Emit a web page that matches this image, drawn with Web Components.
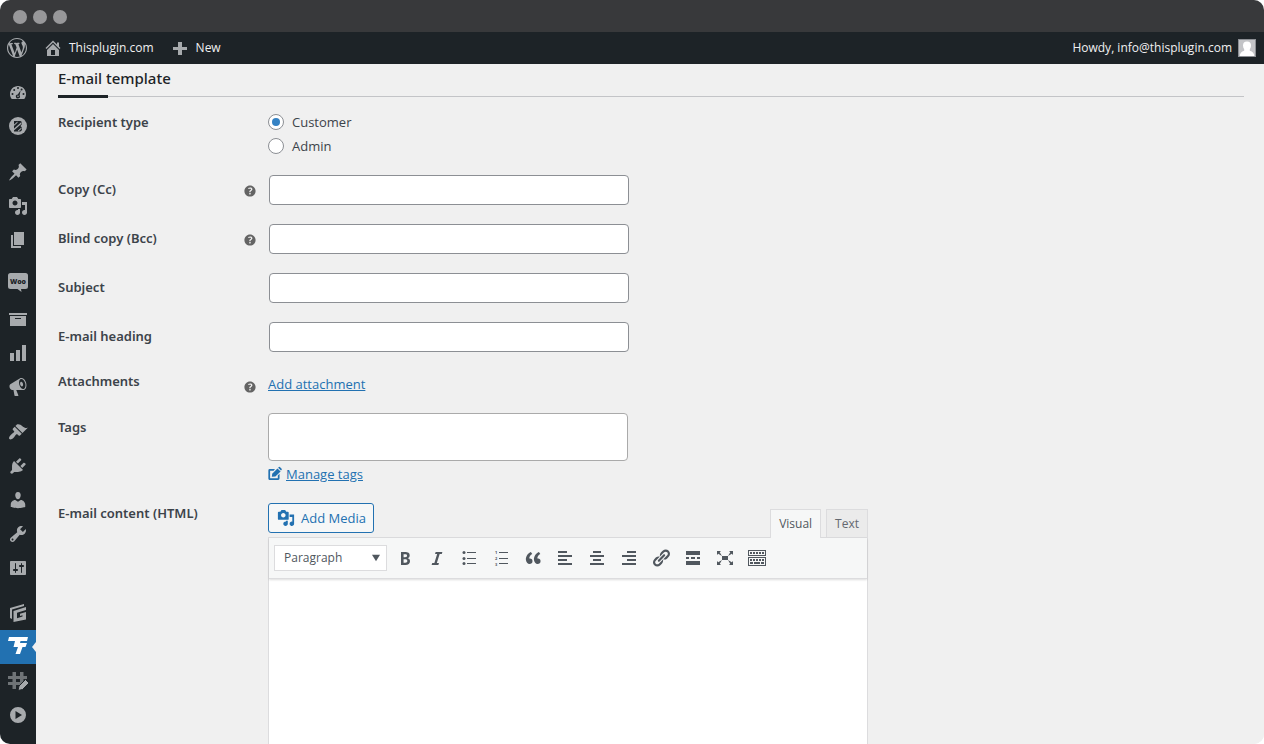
<!DOCTYPE html>
<html lang="en">
<head>
<meta charset="utf-8">
<meta name="viewport" content="width=device-width, initial-scale=1">
<title>E-mail template</title>
<style>
  body { margin: 0; background: #fff; color: #3c434a; font: 13px/20px "Open Sans", "Noto Sans", sans-serif; }
</style>
</head>
<body>
<app-window>
  <admin-bar slot="bar"></admin-bar>
  <admin-menu slot="menu"></admin-menu>
  <email-form></email-form>
</app-window>

<script>
const ICONS = {
  wordpress: '<path d="M20 10c0-5.51-4.49-10-10-10C4.48 0 0 4.49 0 10c0 5.52 4.48 10 10 10 5.51 0 10-4.48 10-10zM7.78 15.37L4.37 6.22c.55-.02 1.17-.08 1.17-.08.5-.06.44-1.13-.06-1.11 0 0-1.45.11-2.37.11-.18 0-.37 0-.58-.01C4.12 2.69 6.87 1.11 10 1.11c2.33 0 4.45.87 6.05 2.34-.68-.11-1.65.39-1.65 1.58 0 .74.45 1.36.9 2.1.35.61.55 1.36.55 2.46 0 1.49-1.4 5-1.4 5l-3.03-8.37c.54-.02.82-.17.82-.17.5-.05.44-1.25-.06-1.22 0 0-1.44.12-2.38.12-.87 0-2.33-.12-2.33-.12-.5-.03-.56 1.2-.06 1.22l.92.08 1.26 3.41zM17.41 10c.24-.64.74-1.87.43-4.25.7 1.29 1.05 2.71 1.05 4.25 0 3.29-1.73 6.24-4.4 7.78.97-2.59 1.94-5.2 2.92-7.78zM6.1 18.09C3.12 16.65 1.11 13.53 1.11 10c0-1.3.23-2.48.72-3.59C3.25 10.3 4.67 14.2 6.1 18.09zm4.03-6.63l2.58 6.98c-.86.29-1.76.45-2.71.45-.79 0-1.57-.11-2.29-.33.81-2.38 1.62-4.74 2.42-7.1z"/>',
  home: '<path d="M16 8.5l1.53 1.53-1.06 1.06L10 4.6l-6.47 6.49-1.06-1.06L10 2.5l4 4v-2h2v4zm-6-2.46l6 5.99V18H4v-5.97zM12 17v-5H8v5h4z"/>',
  plus: '<path d="M8 4h4v5h5v3h-5v5H8v-5H3V9h5z"/>',
  dashboard: '<path fill-rule="evenodd" d="M3.76 16h12.48c1.1-1.37 1.76-3.11 1.76-5 0-4.42-3.58-8-8-8s-8 3.58-8 8c0 1.89.66 3.63 1.76 5zM9 5a1 1 0 1 0 2 0 1 1 0 1 0-2 0zM5.2 7a1 1 0 1 0 2 0 1 1 0 1 0-2 0zM12.6 6.6a1 1 0 1 0 2 0 1 1 0 1 0-2 0zM3.5 11a1 1 0 1 0 2 0 1 1 0 1 0-2 0zM14.5 11a1 1 0 1 0 2 0 1 1 0 1 0-2 0zM12.6 7.3l-1 5.2a2 2 0 1 1-1.8-1zM9.2 13.2a.8.8 0 1 0 1.6 0 .8.8 0 1 0-1.6 0z"/>',
  badge: '<circle cx="10" cy="9" r="9"/><path class="hole" d="M6 4h6.500Q14.500 4.500 14 7L12.500 9Q14.500 10 14 12.500T11.500 14.500H6z"/><path d="M5 12.500L13.500 5v1.800L5 14.300zM5 8.500L9.500 4.500v1.300L5 9.800zM10 13.500l3.500-3v1.300l-3.500 3z"/>',
  pin: '<path d="M10.44 3.02l1.82-1.82 6.36 6.35-1.83 1.82c-1.05-.68-2.48-.57-3.41.36l-.75.75c-.92.93-1.04 2.35-.35 3.41l-1.83 1.82-2.41-2.41-2.8 2.79c-.42.42-3.38 2.71-3.8 2.29s1.86-3.39 2.28-3.81l2.79-2.79L4.1 9.36l1.83-1.82c1.05.69 2.48.57 3.4-.36l.75-.75c.93-.92 1.05-2.35.36-3.41z"/>',
  media: '<path d="M13 11V4c0-.55-.45-1-1-1h-1.670L9 1H5L3.670 3H2c-.55 0-1 .45-1 1v7c0 .55.45 1 1 1h10c.55 0 1-.45 1-1zM7 4.500c1.380 0 2.500 1.120 2.500 2.500S8.380 9.500 7 9.500 4.500 8.380 4.500 7 5.620 4.500 7 4.500zM14 6h5v10.500c0 1.380-1.120 2.500-2.500 2.500S14 17.880 14 16.500s1.120-2.500 2.500-2.500c.17 0 .34.02.5.05V9h-3V6zm-4 8.050V13h2v3.500c0 1.380-1.120 2.500-2.500 2.500S7 17.880 7 16.500 8.120 14 9.500 14c.17 0 .34.02.5.05z"/>',
  pages: '<path d="M6 15V2h10v13H6zm-1 1h8v2H3V5h2v11z"/>',
  woo: '<path d="M2.500-2h15q2.500 0 2.500 2.500v11q0 2.500-2.500 2.500H13l.5 3-4-3h-7Q0 14 0 11.500V.500Q0-2 2.500-2z"/><text class="hole" x="10" y="9" text-anchor="middle" font-family="Open Sans, sans-serif" font-size="7" font-weight="800">Woo</text>',
  archive: '<path d="M19 4v2H1V4h18zM2 7h16v10H2V7zm11 3V9H7v1h6z"/>',
  chart: '<path d="M18 18V2h-4v16h4zm-6 0V7H8v11h4zm-6 0v-8H2v8h4z"/>',
  megaphone: '<path d="M18.15 5.94c.46 1.62.38 3.22-.02 4.48-.42 1.28-1.26 2.18-2.3 2.48-.16.06-.26.06-.4.06-.06.02-.12.02-.18.02-.06.02-.14.02-.22.02h-6.8l2.22 5.5c.02.14-.06.26-.14.34-.08.1-.24.16-.34.16H6.95c-.1 0-.26-.06-.34-.16-.08-.08-.16-.2-.14-.34l-1-5.5H4.25l-.02-.02c-.5.06-1.08-.18-1.54-.62s-.88-1.08-1.06-1.88c-.24-.8-.2-1.56-.02-2.2.18-.62.58-1.08 1.06-1.3l.02-.02 9-5.4c.1-.06.18-.1.24-.16.06-.04.14-.08.24-.12.16-.08.28-.12.5-.18 1.04-.3 2.24.1 3.22.98s1.84 2.24 2.26 3.86zm-2.58 5.98h-.02c.4-.1.74-.34 1.04-.7.58-.7.86-1.76.86-3.04 0-.64-.1-1.3-.28-1.98-.34-1.36-1.02-2.5-1.78-3.24s-1.68-1.1-2.46-.88c-.82.22-1.4.96-1.7 2-.32 1.04-.28 2.36.06 3.72.38 1.36 1 2.5 1.8 3.24.78.74 1.62 1.1 2.48.88zm-2.54-7.08c.22-.04.42-.02.62.04.38.16.76.48 1.02 1s.42 1.2.42 1.78c0 .3-.04.56-.12.8-.18.48-.44.84-.86.94-.34.1-.8-.06-1.14-.4s-.64-.86-.78-1.5c-.18-.62-.12-1.24.02-1.72s.48-.84.82-.94z"/>',
  brush: '<path d="M14.48 11.06L7.41 3.99l1.5-1.5c.5-.56 2.3-.47 3.51.32 1.21.8 1.43 1.28 2.91 2.1 1.18.64 2.45 1.26 4.45.85zm-.71.71L6.7 4.7 4.93 6.47c-.39.39-.39 1.02 0 1.41l1.06 1.06c.39.39.39 1.03 0 1.42-.6.6-1.43 1.11-2.21 1.69-.35.26-.7.53-1.01.84C1.43 14.23.4 16.08 1.4 17.07c.99 1 2.84-.03 4.18-1.36.31-.31.58-.66.85-1.02.57-.78 1.08-1.61 1.69-2.21.39-.39 1.02-.39 1.41 0l1.06 1.06c.39.39 1.02.39 1.41 0z"/>',
  plug: '<path d="M13.11 4.36L9.87 7.6 8 5.73l3.24-3.24c.35-.34 1.05-.2 1.56.32.52.51.66 1.21.31 1.55zm-8 1.77l.91-1.12 9.01 9.01-1.19.84c-.71.71-2.63 1.16-3.82 1.16H6.14L4.9 17.26c-.59.59-1.54.59-2.12 0-.59-.58-.59-1.53 0-2.12l1.24-1.24v-3.88c0-1.13.4-3.19 1.09-3.89zm7.26 3.97l3.24-3.24c.34-.35 1.04-.21 1.55.31.52.51.66 1.21.31 1.55l-3.24 3.25z"/>',
  user: '<path d="M10 9.250c-2.270 0-2.730-3.440-2.730-3.440C7 4.020 7.820 2 9.970 2c2.160 0 2.980 2.020 2.710 3.810 0 0-.41 3.440-2.680 3.440zm0 2.570L12.720 10c2.390 0 4.520 2.330 4.520 4.530v2.490s-3.650 1.130-7.240 1.130c-3.650 0-7.240-1.130-7.240-1.130v-2.490c0-2.250 1.940-4.480 4.470-4.480z"/>',
  wrench: '<path d="M16.68 9.77c-1.34 1.34-3.3 1.67-4.95.99l-5.41 6.52c-.99.99-2.59.99-3.58 0s-.99-2.59 0-3.57l6.52-5.42c-.68-1.65-.35-3.61.99-4.95 1.28-1.28 3.12-1.62 4.72-1.06l-2.89 2.89 2.82 2.82 2.86-2.87c.53 1.58.18 3.39-1.08 4.65zM3.81 16.21c.4.39 1.04.39 1.43 0 .4-.4.4-1.04 0-1.43-.39-.4-1.03-.4-1.43 0-.39.39-.39 1.03 0 1.43z"/>',
  sliders: '<path d="M18 16V4c0-.55-.45-1-1-1H3c-.55 0-1 .45-1 1v12c0 .55.45 1 1 1h14c.55 0 1-.45 1-1zM8 11h1c.55 0 1 .45 1 1s-.45 1-1 1H8v1.5c0 .28-.22.5-.5.5s-.5-.22-.5-.5V13H6c-.55 0-1-.45-1-1s.45-1 1-1h1V5.5c0-.28.22-.5.5-.5s.5.22.5.5V11zm5-2h-1c-.55 0-1-.45-1-1s.45-1 1-1h1V5.5c0-.28.22-.5.5-.5s.5.22.5.5V7h1c.55 0 1 .45 1 1s-.45 1-1 1h-1v5.5c0 .28-.22.5-.5.5s-.5-.22-.5-.5V9z"/>',
  cards: '<path d="M2 5L16 1v2L4 6.500V16l-2-1zM5.500 8L18 4v3L9 9.800v5.400l5.500-1.700v-1.300l-2.500.8v-2.300L18 9v7.500L5.500 19z"/>',
  bolt: '<path d="M1 0H20L19 4H12.500L12 6H19L17.500 10H14.500L12 17H7.500L10 10H5.500L7 4H0z"/>',
  hash: '<path opacity=".6" d="M4.500 1H8v4h4V1h3.500v4H19v3h-3.500v3H18v3H8v4H4.500v-4H0v-3h4.500V8H0V5h4.500zM8 8v3h4V8z"/><path class="edge" d="M10 19.500l1-4.500 6.500-6.500 3.500 3.500-6.500 6.500z"/>',
  play: '<path fill-rule="evenodd" d="M10 2a8 8 0 1 0 0 16 8 8 0 1 0 0-16zM7.500 6v8l6.500-4z"/>',
  help: '<path d="M17 10c0-3.870-3.140-7-7-7-3.870 0-7 3.130-7 7s3.130 7 7 7c3.860 0 7-3.130 7-7zm-6.300 1.480H9.140v-.43c0-.38.08-.7.24-.98s.46-.57.88-.89c.41-.29.68-.53.81-.71.14-.18.2-.39.2-.62 0-.25-.09-.44-.28-.58-.19-.13-.45-.19-.79-.19-.58 0-1.250.19-2 .57l-.64-1.280c.87-.49 1.800-.74 2.770-.74.81 0 1.450.2 1.920.58.48.39.71.91.71 1.550 0 .43-.09.8-.29 1.110-.19.32-.57.67-1.110 1.060-.38.28-.61.49-.71.63-.1.15-.15.34-.15.57v.35zm-1.470 2.740c-.18-.17-.27-.42-.27-.73 0-.33.08-.58.26-.75s.43-.25.77-.25c.32 0 .57.09.75.26s.27.42.27.74c0 .3-.09.55-.27.72-.18.18-.43.27-.75.27-.33 0-.58-.09-.76-.26z"/>',
  edit: '<path d="M1.500 3H10L8 5.500H3V16h11v-4l2.500-2.500v7q0 2-2 2h-12.500Q.5 18.500.5 16.500V5Q.5 3 2.500 3z"/><path d="M5.500 14l.5-4.500L13.500 2 18 6.500l-7.500 7z"/><path d="M14.500 1L15.500 0q.8-.6 1.500 0l2.500 2.500q.6.800 0 1.500l-1 1z"/>',
  bold: '<path d="M6 4v13h4.54c1.37 0 2.46-.33 3.26-1 .8-.66 1.2-1.58 1.2-2.77 0-.84-.17-1.51-.51-2.01s-.9-.85-1.67-1.03v-.09c.57-.1 1.02-.4 1.36-.9s.51-1.13.51-1.91c0-1.14-.39-1.98-1.17-2.5C12.75 4.26 11.5 4 9.78 4H6zm2.57 5.15V6.26h1.36c.73 0 1.27.11 1.61.32.34.22.51.58.51 1.07 0 .54-.16.92-.47 1.15s-.82.35-1.51.35h-1.5zm0 2.19h1.6c1.44 0 2.16.53 2.16 1.61 0 .6-.17 1.05-.51 1.34s-.86.43-1.57.43H8.57v-3.38z"/>',
  italic: '<path d="M14.780 6h-2.130l-2.800 9h2.120l-.62 2H4.600l.62-2h2.140l2.800-9H8.030l.62-2h6.750z"/>',
  bullets: '<path d="M8 4h9v1H8zM8 10h9v1H8zM8 15h9v1H8z"/><circle cx="5" cy="4.500" r="1.500"/><circle cx="5" cy="10.500" r="1.500"/><circle cx="5" cy="15.500" r="1.500"/>',
  numbers: '<path d="M8 4h9v1H8zM8 10h9v1H8zM8 15h9v1H8z"/><g font-family="Open Sans, sans-serif" font-size="4" font-weight="700"><text x="4" y="6">1</text><text x="4" y="12">2</text><text x="4" y="18">3</text></g>',
  quote: '<path d="M9.49 13.22c0-.74-.2-1.38-.61-1.9-.62-.78-1.83-.88-2.53-.72-.29-1.65 1.11-3.75 2.92-4.65L7.88 4c-2.73 1.3-5.42 4.28-4.96 8.05C3.21 14.43 4.59 16 6.54 16c.85 0 1.56-.25 2.12-.75s.83-1.18.83-2.03zm8.05 0c0-.74-.2-1.38-.61-1.9-.63-.78-1.83-.88-2.53-.72-.29-1.65 1.11-3.75 2.92-4.65L15.93 4c-2.73 1.3-5.41 4.28-4.95 8.05.29 2.38 1.66 3.95 3.61 3.95.85 0 1.56-.25 2.12-.75s.83-1.18.83-2.03z"/>',
  left: '<path d="M3 3h9v2H3zM3 7h14v2H3zM3 11h9v2H3zM3 15h14v2H3z"/>',
  center: '<path d="M6 3h8v2H6zM3 7h14v2H3zM6 11h8v2H6zM3 15h14v2H3z"/>',
  right: '<path d="M8 3h9v2H8zM3 7h14v2H3zM8 11h9v2H8zM3 15h14v2H3z"/>',
  link: '<path d="M17.74 2.76c1.68 1.69 1.68 4.41 0 6.1l-1.53 1.52c-1.12 1.12-2.7 1.47-4.14 1.09l2.62-2.61.76-.77.76-.76c.84-.84.84-2.2 0-3.04-.84-.85-2.2-.85-3.04 0l-.77.76-3.38 3.38c-.37-1.44-.02-3.02 1.1-4.14l1.52-1.53c1.69-1.68 4.42-1.68 6.1 0zM8.59 13.43l5.34-5.34c.42-.42.42-1.1 0-1.52-.44-.43-1.13-.39-1.53 0l-5.33 5.34c-.42.42-.42 1.1 0 1.52.44.43 1.13.39 1.52 0zm-.76 2.29l4.14-4.15c.38 1.44.03 3.02-1.09 4.14l-1.52 1.53c-1.69 1.68-4.41 1.68-6.1 0-1.68-1.68-1.68-4.42 0-6.1l1.53-1.52c1.12-1.12 2.7-1.47 4.14-1.1l-4.14 4.15c-.85.84-.85 2.2 0 3.05.84.84 2.2.84 3.04 0z"/>',
  more: '<path d="M17 7V3H3v4h14zM6 11V9H3v2h3zm6 0V9H8v2h4zm5 0V9h-3v2h3zm0 6v-4H3v4h14z"/>',
  expand: '<path d="M7 8h6v4H7zM2 13v4h4l-1.200-1.200L7 12l-3.800 2.200zM14 17h4v-4l-1.200 1.200L13 12l2.200 3.800zM14 3l1.300 1.300L13 8l3.800-2.200L18 7V3zM6 3H2v4l1.200-1.200L7 8 4.700 4.300z"/>',
  keyboard: '<path fill-rule="evenodd" d="M1 2h18v6H1zM2 3v4h16V3zM1 9h18v9H1zM2 10v7h16v-7z"/><path d="M3 4h2v2H3zM6 4h2v2H6zM9 4h2v2H9zM12 4h2v2h-2zM15 4h2v2h-2zM3 11h2v2H3zM6 11h2v2H6zM9 11h2v2H9zM12 11h2v2h-2zM15 11h2v2h-2zM3 14h3v2H3zM7 14h6v2H7zM14 14h3v2h-3z"/>',
  arrow: '<path d="M5 6h10l-5 8z"/>',
  person: '<path fill="#c3c4c7" d="M0 0h20v20H0z"/><path fill="#fff" d="M1 20q0-5 5.500-6.500v-2Q5 9.500 5 7q0-5 5-5t5 5q0 2.500-1.500 4.500v2Q19 15 19 20z"/>'
};

/* Registers an element whose shadow root is cloned from one template. */
function define(name, html, setup) {
  const template = document.createElement('template');
  template.innerHTML = '<style>*{box-sizing:border-box}</style>' + html;
  customElements.define(name, class extends HTMLElement {
    constructor() {
      super();
      this.attachShadow({ mode: 'open' }).append(template.content.cloneNode(true));
    }
    connectedCallback() { if (setup) setup(this, this.shadowRoot); }
  });
}

define('ui-icon', `<style>
  :host { display: block; flex: none; width: 20px; height: 20px; }
  svg { display: block; width: 100%; height: 100%; fill: currentColor; overflow: visible; }
  .hole { fill: #1d2327; }
  .edge { stroke: #1d2327; stroke-width: 1; }
</style><svg viewBox="0 0 20 20" aria-hidden="true"></svg>`, (el, root) => {
  root.querySelector('svg').innerHTML = ICONS[el.getAttribute('name')] || '';
});

define('app-window', `<style>
  :host { display: flex; flex-direction: column; height: 100vh; overflow: hidden; border-radius: 10px; background: #f0f0f1; }
  header { flex: none; display: flex; align-items: center; gap: 6px; height: 32px; padding: 2px 13px 0; background: #38393b; }
  i { width: 14px; height: 14px; border-radius: 50%; background: #98989a; }
  .body { flex: 1; display: flex; min-height: 0; }
  main { flex: 1; min-width: 0; overflow: auto; scrollbar-width: none; background: #f0f0f0; }
</style>
<header><i></i><i></i><i></i></header>
<slot name="bar"></slot>
<div class="body"><slot name="menu"></slot><main><slot></slot></main></div>`);

define('admin-bar', `<style>
  :host { flex: none; display: flex; justify-content: space-between; height: 32px; padding: 0 8px 0 7px; background: #1d2327; font-size: 12px; }
  nav, a { display: flex; align-items: center; }
  nav { gap: 16px; }
  a { gap: 6px; color: #f0f0f1; text-decoration: none; }
  ui-icon { color: #a7aaad; }
  .avatar { width: 18px; height: 18px; border: 1px solid #8c8f94; }
</style>
<nav aria-label="Toolbar">
  <a href="#" aria-label="About WordPress"><ui-icon name="wordpress"></ui-icon></a>
  <a href="#"><ui-icon name="home"></ui-icon>Thisplugin.com</a>
  <a href="#"><ui-icon name="plus"></ui-icon>New</a>
</nav>
<a href="#">Howdy, info@thisplugin.com<ui-icon class="avatar" name="person"></ui-icon></a>`);

define('admin-menu', `<style>
  :host { flex: none; width: 36px; padding-top: 12px; background: #1d2327; }
  nav, div { display: flex; flex-direction: column; }
  nav { gap: 11px; }
  a { position: relative; display: flex; justify-content: center; align-items: center; height: 34px; color: #a7aaad; }
  a[aria-current] { background: #2271b1; color: #fff; }
  a[aria-current]::after { content: ""; position: absolute; right: 0; border: 5px solid transparent; border-left: 0; border-right: 4px solid #f0f0f1; }
</style><nav aria-label="Main menu"></nav>`, (el, root) => {
  const groups = [
    [['dashboard', 'Dashboard'], ['badge', 'Builder']],
    [['pin', 'Posts'], ['media', 'Media'], ['pages', 'Pages']],
    [['woo', 'WooCommerce'], ['archive', 'Products'], ['chart', 'Analytics'], ['megaphone', 'Marketing']],
    [['brush', 'Appearance'], ['plug', 'Plugins'], ['user', 'Users'], ['wrench', 'Tools'], ['sliders', 'Settings']],
    [['cards', 'Cards'], ['bolt', 'Templates'], ['hash', 'Snippets'], ['play', 'Player']]
  ];
  root.querySelector('nav').innerHTML = groups.map(g => '<div>' + g.map(([icon, label]) =>
    `<a href="#" aria-label="${label}"${icon === 'bolt' ? ' aria-current="page"' : ''}><ui-icon name="${icon}"></ui-icon></a>`
  ).join('') + '</div>').join('');
});

define('field-row', `<style>
  :host { display: grid; grid-template-columns: 184px 26px minmax(0, 1fr); align-items: start; }
  .label { padding-top: 13px; color: #3c434a; font-family: "Noto Sans", sans-serif; font-weight: 600; }
  :host([kind=plain]) .label { padding-top: 9px; }
  :host([kind=choice]) .label { padding-top: 11px; }
  .help { padding-top: 17px; color: #646464; }
  .help ui-icon { width: 16px; height: 16px; }
  .control { padding: 9px 0 10px; }
  :host([kind=choice]) .control { padding-bottom: 8px; }
</style>
<div class="label"><slot name="label"></slot></div>
<div class="help"></div>
<div class="control"><slot></slot></div>`, (el, root) => {
  if (el.hasAttribute('help')) root.querySelector('.help').innerHTML = '<ui-icon name="help"></ui-icon>';
});

define('tool-button', `<style>
  :host { display: block; }
  button { display: flex; align-items: center; justify-content: center; width: 32px; height: 30px; padding: 0; border: 0; background: none; color: #50575e; }
</style><button type="button"></button>`, (el, root) => {
  const button = root.querySelector('button');
  button.innerHTML = `<ui-icon name="${el.getAttribute('icon')}"></ui-icon>`;
  button.setAttribute('aria-label', el.getAttribute('label'));
});

define('rich-editor', `<style>
  :host { display: block; max-width: 600px; }
  button, select, textarea { font: inherit; }
  .top { display: flex; justify-content: space-between; height: 34px; }
  .media { display: flex; align-items: center; gap: 5px; height: 30px; padding: 0 7px; border: 1px solid #2271b1; border-radius: 3px; background: #f6f7f7; color: #2271b1; }
  .media ui-icon { width: 18px; height: 18px; margin: 0 1px; }
  .tabs { display: flex; align-items: flex-start; gap: 5px; padding-top: 6px; }
  .tabs button { height: 28px; padding: 0 8px; border: 1px solid #dcdcde; border-bottom: 0; background: #ebebeb; color: #646970; font-size: 12px; }
  .tabs button[aria-selected=true] { position: relative; z-index: 1; height: 29px; background: #f6f7f7; color: #50575e; }
  .frame { border: 1px solid #dcdcde; background: #fff; }
  .tools { display: flex; align-items: center; height: 41px; padding: 0 5px; border-bottom: 1px solid #dcdcde; box-shadow: 0 1px 2px #0002; background: #f6f7f7; }
  .pick { display: grid; align-items: center; width: 113px; margin-right: 2px; }
  .pick > * { grid-area: 1 / 1; }
  select { appearance: none; width: 100%; height: 26px; padding: 0 9px; border: 1px solid #dcdcde; border-radius: 0; background: #fff; color: #50575e; font-size: 12px; }
  .pick ui-icon { justify-self: end; width: 16px; height: 16px; margin-right: 3px; color: #50575e; pointer-events: none; }
  textarea { display: block; width: 100%; height: 300px; padding: 10px; border: 0; background: none; resize: none; }
</style>
<div class="top">
  <button class="media" type="button"><ui-icon name="media"></ui-icon>Add Media</button>
  <div class="tabs" role="tablist">
    <button type="button" role="tab" aria-selected="true">Visual</button>
    <button type="button" role="tab" aria-selected="false">Text</button>
  </div>
</div>
<div class="frame">
  <div class="tools">
    <div class="pick"><select aria-label="Block format"><option>Paragraph</option></select><ui-icon name="arrow"></ui-icon></div>
    <tool-button icon="bold" label="Bold"></tool-button>
    <tool-button icon="italic" label="Italic"></tool-button>
    <tool-button icon="bullets" label="Bulleted list"></tool-button>
    <tool-button icon="numbers" label="Numbered list"></tool-button>
    <tool-button icon="quote" label="Blockquote"></tool-button>
    <tool-button icon="left" label="Align left"></tool-button>
    <tool-button icon="center" label="Align center"></tool-button>
    <tool-button icon="right" label="Align right"></tool-button>
    <tool-button icon="link" label="Insert link"></tool-button>
    <tool-button icon="more" label="Insert Read More tag"></tool-button>
    <tool-button icon="expand" label="Fullscreen"></tool-button>
    <tool-button icon="keyboard" label="Toolbar toggle"></tool-button>
  </div>
  <textarea aria-label="E-mail content (HTML)"></textarea>
</div>`);

define('email-form', `<style>
  :host { display: block; padding: 0 20px 0 22px; }
  h2 { display: flex; flex-direction: column; gap: 2px; margin: 0 0 3px; color: #1d2327; font-family: "Noto Sans", sans-serif; font-size: 15px; line-height: 28px; font-weight: 500; }
  h2::after { content: ""; height: 4px; background: linear-gradient(#1d2327 0 0) 0 1px / 50px 3px no-repeat, linear-gradient(#c3c4c7 0 0) 0 2px / 100% 1px no-repeat; }
  .radios label { display: flex; align-items: center; gap: 8px; height: 24px; }
  input { font: inherit; }
  input[type=radio] { appearance: none; display: grid; place-items: center; width: 16px; height: 16px; margin: 0; border: 1px solid #8c8f94; border-radius: 50%; background: #fff; }
  input[type=radio]:checked::before { content: ""; width: 8px; height: 8px; border-radius: 50%; background: #3582c4; }
  input[type=text] { display: block; width: 100%; max-width: 360px; height: 30px; margin: 0 1px; padding: 0 8px; border: 1px solid #8c8f94; border-radius: 4px; background: #fff; }
  input.tags { height: 48px; margin: 0; border-color: #aaa; }
  a { color: #2271b1; }
  .attach { padding-top: 3px; }
  .manage { display: flex; align-items: center; gap: 4px; padding-top: 3px; color: #2271b1; }
  .manage ui-icon { width: 14px; height: 14px; }
</style>
<h2>E-mail template</h2>
<form>
  <field-row kind="choice">
    <span slot="label" id="recipient">Recipient type</span>
    <div class="radios" role="radiogroup" aria-labelledby="recipient">
      <label><input type="radio" name="recipient" checked>Customer</label>
      <label><input type="radio" name="recipient">Admin</label>
    </div>
  </field-row>
  <field-row help><label slot="label" for="cc">Copy (Cc)</label><input type="text" id="cc"></field-row>
  <field-row help><label slot="label" for="bcc">Blind copy (Bcc)</label><input type="text" id="bcc"></field-row>
  <field-row><label slot="label" for="subject">Subject</label><input type="text" id="subject"></field-row>
  <field-row><label slot="label" for="heading">E-mail heading</label><input type="text" id="heading"></field-row>
  <field-row kind="plain" help><span slot="label">Attachments</span><div class="attach"><a href="#">Add attachment</a></div></field-row>
  <field-row>
    <label slot="label" for="tags">Tags</label>
    <input class="tags" type="text" id="tags">
    <div class="manage"><ui-icon name="edit"></ui-icon><a href="#">Manage tags</a></div>
  </field-row>
  <field-row kind="plain"><span slot="label">E-mail content (HTML)</span><rich-editor></rich-editor></field-row>
</form>`);
</script>
</body>
</html>
